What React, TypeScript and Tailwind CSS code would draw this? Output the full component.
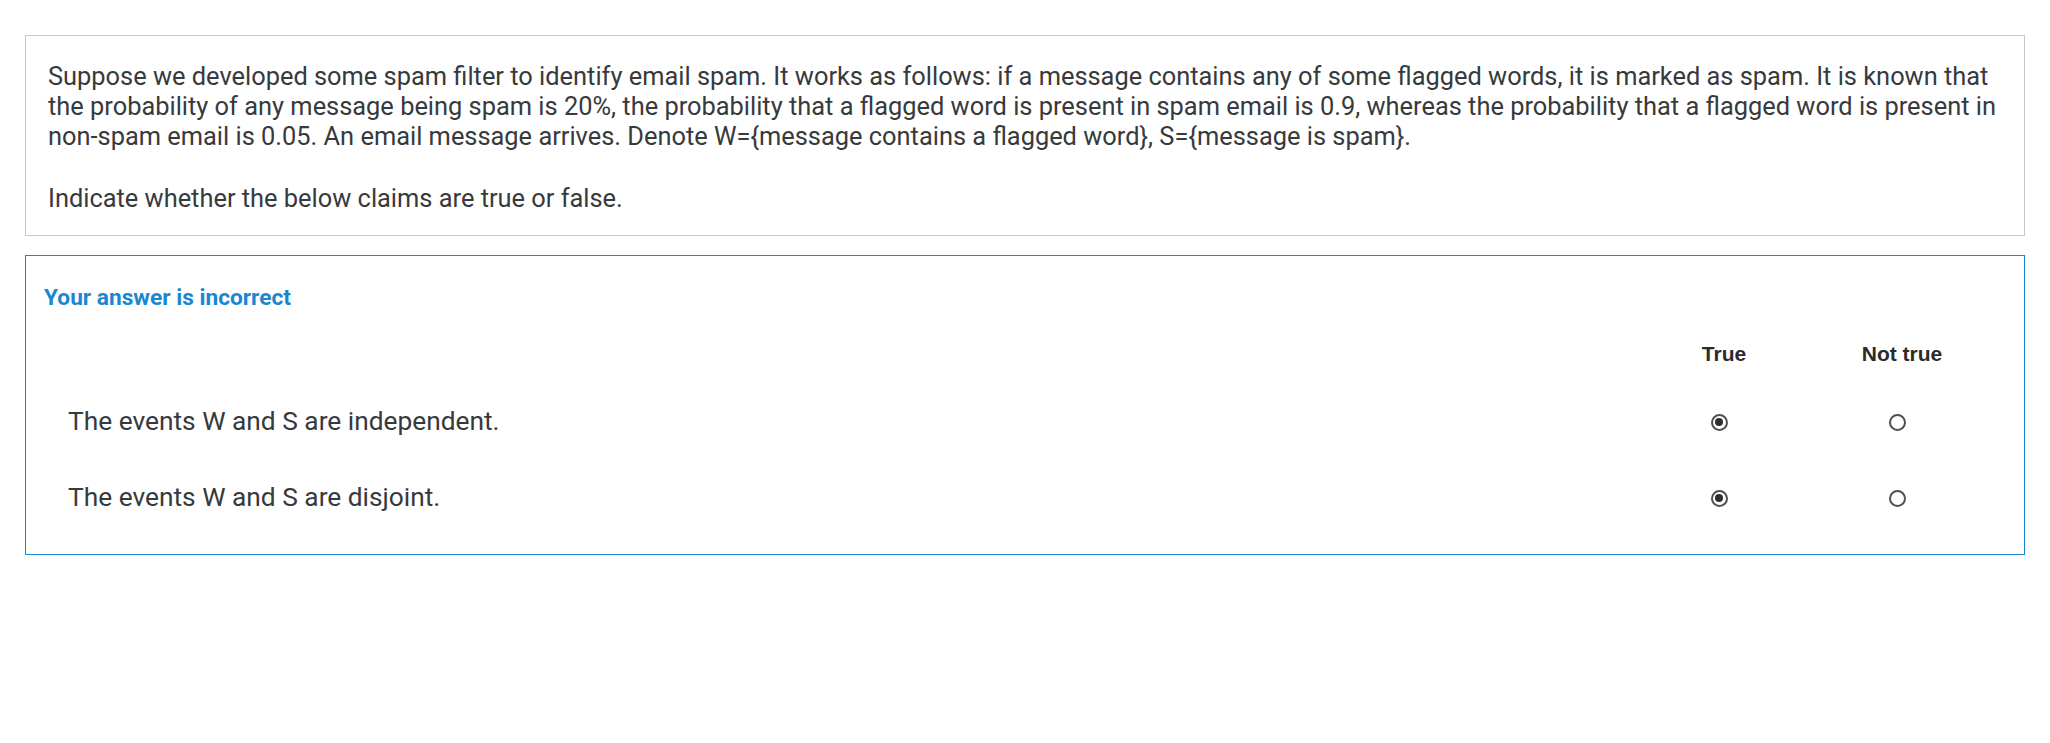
import React from 'react';

type Claim = {
  text: string;
  answer: 'true' | 'false';
};

const claims: Claim[] = [
  { text: 'The events W and S are independent.', answer: 'true' },
  { text: 'The events W and S are disjoint.', answer: 'true' },
];

function Radio({ checked }: { checked: boolean }) {
  return (
    <span className="mr-[10px] flex h-[17px] w-[17px] items-center justify-center rounded-full border-[2.5px] border-[#505050] bg-white">
      {checked && <span className="h-[8px] w-[8px] rounded-full bg-[#2d2d2d]" />}
    </span>
  );
}

export default function App() {
  return (
    <div className="bg-white px-[25px] pt-[35px] font-['Roboto',sans-serif] text-[#373a3c]">
      <div className="border border-[#c8c8c8] px-[22px] pt-[25px] pb-[22px] text-[25.4px] leading-[30px]">
        <p>
          Suppose we developed some spam filter to identify email spam. It works as follows: if a message
          contains any of some flagged words, it is marked as spam. It is known that the probability of any
          message being spam is 20%, the probability that a flagged word is present in spam email is 0.9,
          whereas the probability that a flagged word is present in non-spam email is 0.05. An email message
          arrives. Denote W=&#123;message contains a flagged word&#125;, S=&#123;message is spam&#125;.
        </p>
        <p className="mt-[32px]">Indicate whether the below claims are true or false.</p>
      </div>

      <div className="mt-[19px] border border-[#1b87d0] px-[18px] pt-[29px] pb-[18px]">
        <div className="text-[22.7px] leading-[26px] font-bold text-[#1b87d0]">Your answer is incorrect</div>

        <div className="mt-[13px] grid grid-cols-[1fr_178px_178px] pr-[15px] text-[26.3px]">
          <div />
          <div className="flex h-[60px] items-center justify-center font-['Liberation_Sans',Arial,sans-serif] text-[21px] font-bold text-[#2b2b2b]">
            True
          </div>
          <div className="flex h-[60px] items-center justify-center font-['Liberation_Sans',Arial,sans-serif] text-[21px] font-bold text-[#2b2b2b]">
            Not true
          </div>

          {claims.map((c) => (
            <React.Fragment key={c.text}>
              <div className="flex h-[76px] items-center pl-[24px]">{c.text}</div>
              <div className="flex h-[76px] items-center justify-center">
                <Radio checked={c.answer === 'true'} />
              </div>
              <div className="flex h-[76px] items-center justify-center">
                <Radio checked={c.answer === 'false'} />
              </div>
            </React.Fragment>
          ))}
        </div>
      </div>
    </div>
  );
}
